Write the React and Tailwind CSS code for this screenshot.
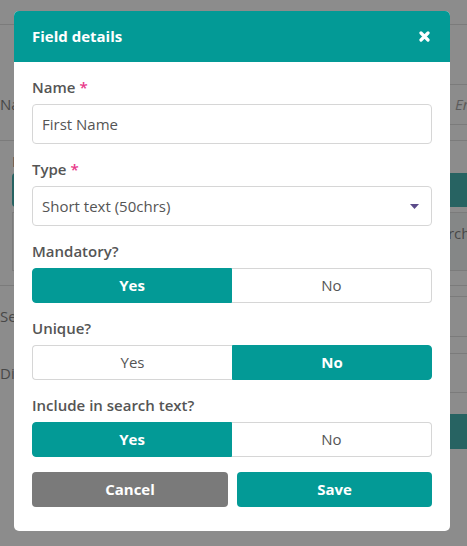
import React from "react";

const TEAL = "bg-[#039a96]";

function Label({ children, required }) {
  return (
    <div className="mb-[7px] text-[15px] leading-[20px] font-semibold text-[#555]">
      {children}
      {required && <span className="ml-[4px] text-[#e8388a]">*</span>}
    </div>
  );
}

function Toggle({ value }) {
  const yes = value === "yes";
  return (
    <div className="flex h-[35px] text-[15px]">
      <div
        className={
          yes
            ? "flex w-[200px] items-center justify-center rounded-l-[4px] border border-[#039a96] bg-[#039a96] font-bold text-white"
            : "flex w-[200px] items-center justify-center rounded-l-[4px] border border-r-0 border-[#d6d6d6] bg-white text-[#555]"
        }
      >
        Yes
      </div>
      <div
        className={
          !yes
            ? "flex flex-1 items-center justify-center rounded-r-[4px] border border-[#039a96] bg-[#039a96] font-bold text-white"
            : "flex flex-1 items-center justify-center rounded-r-[4px] border border-l-0 border-[#d6d6d6] bg-white text-[#555]"
        }
      >
        No
      </div>
    </div>
  );
}

export default function App() {
  return (
    <div className="relative h-[546px] w-[467px] overflow-hidden bg-white font-['Open_Sans',sans-serif] text-[#555]">
      {/* underlying page */}
      <div className="flex w-[467px] flex-col text-[15px]">
        <div className="h-[25px] border-b border-[#d5d5d5]" />
        <div className="flex h-[116px] items-start border-b border-[#d5d5d5] pt-[59px]">
          <div className="flex h-[40px] w-[440px] shrink-0 items-center">Name</div>
          <div className="flex h-[41px] w-[200px] shrink-0 items-center whitespace-nowrap border-y border-[#d5d5d5] pl-[15px] italic text-[#888]">
            Enter first name
          </div>
        </div>
        <div className="flex h-[145px] flex-col border-b border-[#d5d5d5] pl-[12px] pt-[8px]">
          <div className="h-[24px] leading-[24px]">Import</div>
          <div className={`h-[34px] w-[500px] shrink-0 rounded-l-[4px] ${TEAL}`} />
          <div className="mt-[5px] flex h-[59px] w-[520px] shrink-0 border border-[#d5d5d5]">
            <div className="w-[397px] shrink-0" />
            <div className="flex flex-1 items-center bg-[#eef2f2] pl-[13px] text-[15px] leading-[17px] text-[#555]">
              <span className="w-[40px]">Search text</span>
            </div>
          </div>
        </div>
        <div className="flex h-[61px] items-center">
          <div className="w-[440px] shrink-0">Search</div>
          <div className="h-[41px] w-[100px] shrink-0 border-y border-[#d5d5d5]" />
        </div>
        <div className="flex h-[52px] items-center">
          <div className="w-[440px] shrink-0">Display</div>
          <div className="h-[40px] w-[100px] shrink-0 border-y border-[#d5d5d5]" />
        </div>
        <div className="mt-[15px] flex">
          <div className="w-[300px] shrink-0" />
          <div className={`h-[35px] w-[200px] shrink-0 rounded-l-[4px] ${TEAL}`} />
        </div>
      </div>

      {/* overlay + modal */}
      <div className="absolute inset-0 bg-[rgba(63,63,63,0.6)] pl-[14px] pt-[11px]">
        <div className="w-[436px] overflow-hidden rounded-[5px] bg-white">
          <div className={`flex h-[51px] items-center justify-between pl-[18px] pr-[20px] ${TEAL}`}>
            <span className="text-[15px] font-bold text-white">Field details</span>
            <svg width="11" height="11" viewBox="0 0 11 11">
              <path d="M2 2 L9 9 M9 2 L2 9" stroke="white" strokeWidth="3.2" strokeLinecap="round" />
            </svg>
          </div>
          <div className="flex flex-col px-[18px] pb-[24px] pt-[15px]">
            <Label required>Name</Label>
            <div className="flex h-[40px] items-center rounded-[4px] border border-[#d6d6d6] px-[9px] text-[15px] text-[#555]">
              First Name
            </div>

            <div className="mt-[15px]">
              <Label required>Type</Label>
            </div>
            <div className="flex h-[40px] items-center justify-between rounded-[4px] border border-[#d6d6d6] pl-[9px] pr-[12px] text-[15px] text-[#555]">
              <span>Short text (50chrs)</span>
              <svg width="9" height="5" viewBox="0 0 9 5">
                <path d="M0 0 L9 0 L4.5 5 Z" fill="#5b4b8a" />
              </svg>
            </div>

            <div className="mt-[15px]">
              <Label>Mandatory?</Label>
            </div>
            <Toggle value="yes" />

            <div className="mt-[15px]">
              <Label>Unique?</Label>
            </div>
            <Toggle value="no" />

            <div className="mt-[15px]">
              <Label>Include in search text?</Label>
            </div>
            <Toggle value="yes" />

            <div className="mt-[15px] flex h-[35px] gap-[9px] text-[15px] font-bold text-white">
              <div className="flex w-[196px] items-center justify-center rounded-[4px] bg-[#7a7a7a]">
                Cancel
              </div>
              <div className={`flex flex-1 items-center justify-center rounded-[4px] ${TEAL}`}>
                Save
              </div>
            </div>
          </div>
        </div>
      </div>
    </div>
  );
}
